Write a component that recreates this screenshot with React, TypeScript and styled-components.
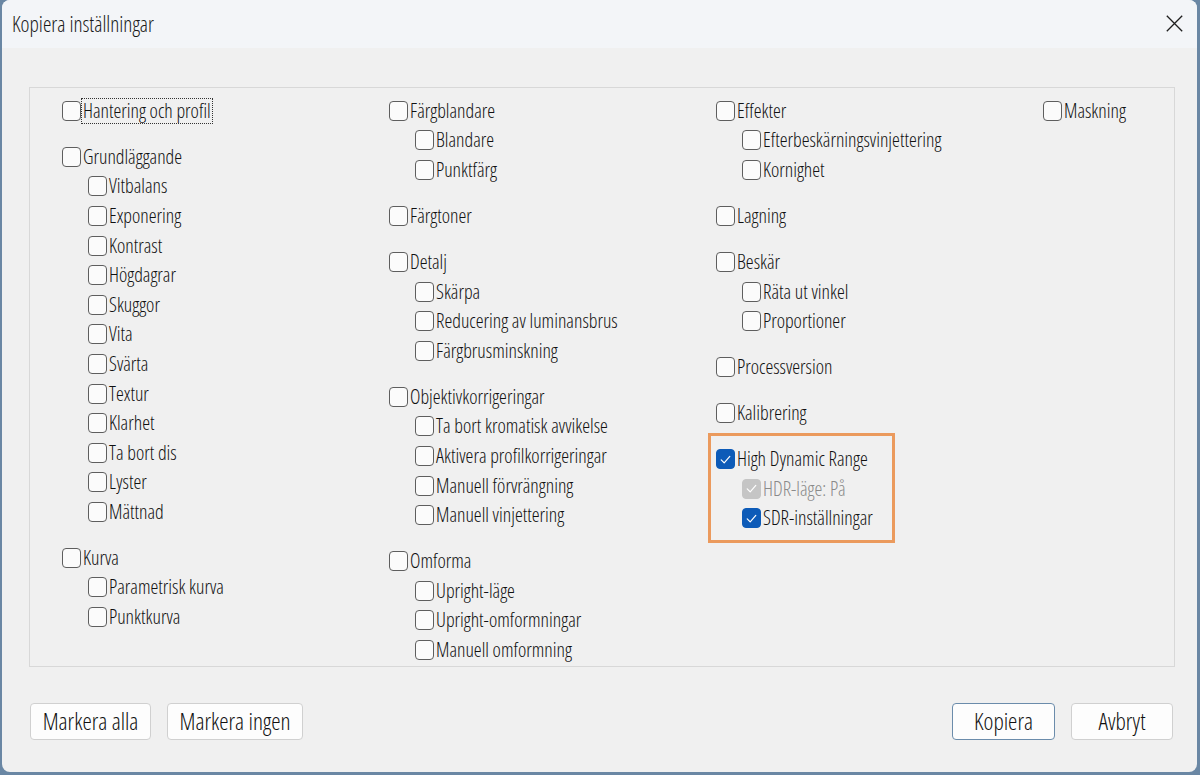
import React from "react";
import styled, { createGlobalStyle, css } from "styled-components";

const GlobalStyle = createGlobalStyle`
  html, body { margin: 0; padding: 0; }
  body {
    background: #6a87a4;
    font-family: "Open Sans", "Noto Sans", sans-serif;
    font-stretch: 75%;
    font-weight: 300;
    color: #1b1b1b;
  }
  #root { padding: 0 3px 3px 2px; }
`;

const Window = styled.div`
  height: 772px;
  background: #f0f0f0;
  border-radius: 8px;
  overflow: hidden;
  display: flex;
  flex-direction: column;
`;

const TitleBar = styled.div`
  height: 48px;
  flex: none;
  background: #f3f5f8;
  display: flex;
  align-items: center;
  justify-content: space-between;
  padding: 0 12px 0 10px;
`;

const Title = styled.div`
  font-size: 21.3px;
  color: #1a1a1a;
  margin-top: -2px;
`;

const CloseButton = styled.button`
  width: 22px;
  height: 22px;
  border: none;
  background: transparent;
  padding: 0;
  display: flex;
  align-items: center;
  justify-content: center;
  margin-top: -1px;
`;

const Content = styled.div`
  flex: 1;
  display: flex;
  flex-direction: column;
  padding: 39px 22px 0 27px;
`;

const GroupBox = styled.div`
  height: 580px;
  border: 1px solid #d8d8d8;
  box-sizing: border-box;
  padding: 8px 0 0 32px;
  display: grid;
  grid-template-columns: repeat(4, 327px);
  align-items: start;
`;

const Column = styled.div`
  display: flex;
  flex-direction: column;
  gap: 16.4px;
`;

const Group = styled.div<{ $highlight?: boolean }>`
  display: flex;
  flex-direction: column;
  position: relative;
  ${(p) =>
    p.$highlight &&
    css`
      &::after {
        content: "";
        position: absolute;
        top: -11px;
        left: -8px;
        width: 187px;
        bottom: -10px;
        box-sizing: border-box;
        border: 3px solid #eb9a5d;
        pointer-events: none;
      }
    `}
`;

const Row = styled.div<{ $sub?: boolean }>`
  height: 29.6px;
  display: flex;
  align-items: center;
  padding-left: ${(p) => (p.$sub ? "26px" : "0")};
`;

const Box = styled.span<{ $checked?: boolean; $disabled?: boolean }>`
  width: 19px;
  height: 20px;
  box-sizing: border-box;
  border-radius: 4px;
  flex: none;
  display: flex;
  align-items: center;
  justify-content: center;
  border: 1px solid #5e5e5e;
  background: #fbfbfb;
  ${(p) =>
    p.$checked &&
    css`
      border-color: #0d5bb8;
      background: #0d5bb8;
    `}
  ${(p) =>
    p.$checked &&
    p.$disabled &&
    css`
      border-color: #c5c5c5;
      background: #c5c5c5;
    `}
`;

const Label = styled.span<{ $focus?: boolean; $disabled?: boolean }>`
  font-size: 19.8px;
  line-height: 24px;
  padding: 0 1px;
  border: 1px dotted ${(p) => (p.$focus ? "#333" : "transparent")};
  color: ${(p) => (p.$disabled ? "#8a8a8a" : "#111111")};
  white-space: nowrap;
`;

const Footer = styled.div`
  display: flex;
  justify-content: space-between;
  padding: 36px 2px 0 1px;
`;

const ButtonGroup = styled.div`
  display: flex;
  gap: 16px;
`;

const Button = styled.button<{ $primary?: boolean; $w: number }>`
  width: ${(p) => p.$w}px;
  height: 37px;
  box-sizing: border-box;
  background: #fdfdfd;
  border: 1px solid ${(p) => (p.$primary ? "#6b8cab" : "#d0d0d0")};
  border-radius: 4px;
  font-family: "Open Sans", "Noto Sans", sans-serif;
  font-stretch: 75%;
  font-weight: 300;
  font-size: 23.5px;
  line-height: 30px;
  color: #111111;
  padding: 0 0 2px;
`;

type Item = {
  label: string;
  checked?: boolean;
  disabled?: boolean;
  focus?: boolean;
  children?: Item[];
  highlight?: boolean;
};

const columns: Item[][] = [
  [
    { label: "Hantering och profil", focus: true },
    {
      label: "Grundläggande",
      children: [
        "Vitbalans",
        "Exponering",
        "Kontrast",
        "Högdagrar",
        "Skuggor",
        "Vita",
        "Svärta",
        "Textur",
        "Klarhet",
        "Ta bort dis",
        "Lyster",
        "Mättnad",
      ].map((label) => ({ label })),
    },
    {
      label: "Kurva",
      children: [{ label: "Parametrisk kurva" }, { label: "Punktkurva" }],
    },
  ],
  [
    { label: "Färgblandare", children: [{ label: "Blandare" }, { label: "Punktfärg" }] },
    { label: "Färgtoner" },
    {
      label: "Detalj",
      children: [
        { label: "Skärpa" },
        { label: "Reducering av luminansbrus" },
        { label: "Färgbrusminskning" },
      ],
    },
    {
      label: "Objektivkorrigeringar",
      children: [
        { label: "Ta bort kromatisk avvikelse" },
        { label: "Aktivera profilkorrigeringar" },
        { label: "Manuell förvrängning" },
        { label: "Manuell vinjettering" },
      ],
    },
    {
      label: "Omforma",
      children: [
        { label: "Upright-läge" },
        { label: "Upright-omformningar" },
        { label: "Manuell omformning" },
      ],
    },
  ],
  [
    {
      label: "Effekter",
      children: [{ label: "Efterbeskärningsvinjettering" }, { label: "Kornighet" }],
    },
    { label: "Lagning" },
    { label: "Beskär", children: [{ label: "Räta ut vinkel" }, { label: "Proportioner" }] },
    { label: "Processversion" },
    { label: "Kalibrering" },
    {
      label: "High Dynamic Range",
      checked: true,
      highlight: true,
      children: [
        { label: "HDR-läge: På", checked: true, disabled: true },
        { label: "SDR-inställningar", checked: true },
      ],
    },
  ],
  [{ label: "Maskning" }],
];

function CheckMark() {
  return (
    <svg width="13" height="13" viewBox="0 0 13 13">
      <polyline
        points="2.2,6.8 5.2,9.8 10.8,3.4"
        fill="none"
        stroke="#ffffff"
        strokeWidth="1.2"
        strokeLinecap="round"
        strokeLinejoin="round"
      />
    </svg>
  );
}

function CheckRow({ item, sub }: { item: Item; sub?: boolean }) {
  return (
    <Row $sub={sub}>
      <Box $checked={item.checked} $disabled={item.disabled}>
        {item.checked && <CheckMark />}
      </Box>
      <Label $focus={item.focus} $disabled={item.disabled}>
        {item.label}
      </Label>
    </Row>
  );
}

export default function App() {
  return (
    <>
      <GlobalStyle />
      <Window>
        <TitleBar>
          <Title>Kopiera inställningar</Title>
          <CloseButton aria-label="Stäng">
            <svg width="17" height="17" viewBox="0 0 17 17">
              <path d="M0.8 0.8 L16.2 16.2 M16.2 0.8 L0.8 16.2" stroke="#1f1f1f" strokeWidth="1.3" />
            </svg>
          </CloseButton>
        </TitleBar>
        <Content>
          <GroupBox>
            {columns.map((col, ci) => (
              <Column key={ci}>
                {col.map((g) => (
                  <Group key={g.label} $highlight={g.highlight}>
                    <CheckRow item={g} />
                    {g.children?.map((c) => (
                      <CheckRow key={c.label} item={c} sub />
                    ))}
                  </Group>
                ))}
              </Column>
            ))}
          </GroupBox>
          <Footer>
            <ButtonGroup>
              <Button $w={121}>Markera alla</Button>
              <Button $w={136}>Markera ingen</Button>
            </ButtonGroup>
            <ButtonGroup>
              <Button $w={103} $primary>
                Kopiera
              </Button>
              <Button $w={102}>Avbryt</Button>
            </ButtonGroup>
          </Footer>
        </Content>
      </Window>
    </>
  );
}
